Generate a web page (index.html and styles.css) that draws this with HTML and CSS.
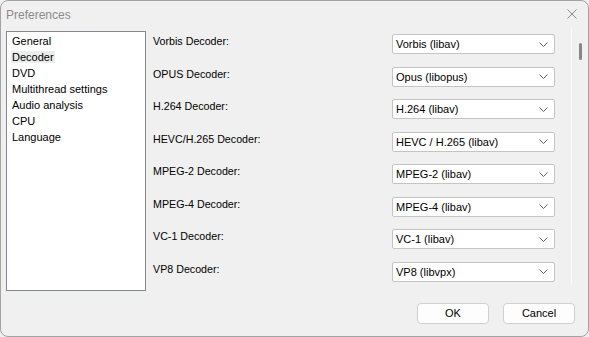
FILE: index.html
```html
<!DOCTYPE html>
<html lang="en">
<head>
  <meta charset="UTF-8">
  <title>Preferences</title>
  <link rel="stylesheet" href="styles.css">
</head>
<body>
  <div class="window">
    <div class="titlebar">
      <span class="title">Preferences</span>
      <svg class="close" width="10" height="10" viewBox="0 0 10 10"><path d="M0.5 0.5L9.5 9.5M9.5 0.5L0.5 9.5" stroke="#8a8a8a" stroke-width="1" fill="none"/></svg>
    </div>
    <div class="main">
      <ul class="pages">
        <li><span>General</span></li>
        <li class="selected"><span>Decoder</span></li>
        <li><span>DVD</span></li>
        <li><span>Multithread settings</span></li>
        <li><span>Audio analysis</span></li>
        <li><span>CPU</span></li>
        <li><span>Language</span></li>
      </ul>
      <div class="panel">
        <div class="rows">
          <div class="row"><label>Vorbis Decoder:</label><div class="combo"><span>Vorbis (libav)</span><svg class="chev" width="9" height="5" viewBox="0 0 9 5"><path d="M0.5 0.5L4.5 4.5L8.5 0.5" stroke="#606060" fill="none"/></svg></div></div>
          <div class="row"><label>OPUS Decoder:</label><div class="combo"><span>Opus (libopus)</span><svg class="chev" width="9" height="5" viewBox="0 0 9 5"><path d="M0.5 0.5L4.5 4.5L8.5 0.5" stroke="#606060" fill="none"/></svg></div></div>
          <div class="row"><label>H.264 Decoder:</label><div class="combo"><span>H.264 (libav)</span><svg class="chev" width="9" height="5" viewBox="0 0 9 5"><path d="M0.5 0.5L4.5 4.5L8.5 0.5" stroke="#606060" fill="none"/></svg></div></div>
          <div class="row"><label>HEVC/H.265 Decoder:</label><div class="combo"><span>HEVC / H.265 (libav)</span><svg class="chev" width="9" height="5" viewBox="0 0 9 5"><path d="M0.5 0.5L4.5 4.5L8.5 0.5" stroke="#606060" fill="none"/></svg></div></div>
          <div class="row"><label>MPEG-2 Decoder:</label><div class="combo"><span>MPEG-2 (libav)</span><svg class="chev" width="9" height="5" viewBox="0 0 9 5"><path d="M0.5 0.5L4.5 4.5L8.5 0.5" stroke="#606060" fill="none"/></svg></div></div>
          <div class="row"><label>MPEG-4 Decoder:</label><div class="combo"><span>MPEG-4 (libav)</span><svg class="chev" width="9" height="5" viewBox="0 0 9 5"><path d="M0.5 0.5L4.5 4.5L8.5 0.5" stroke="#606060" fill="none"/></svg></div></div>
          <div class="row"><label>VC-1 Decoder:</label><div class="combo"><span>VC-1 (libav)</span><svg class="chev" width="9" height="5" viewBox="0 0 9 5"><path d="M0.5 0.5L4.5 4.5L8.5 0.5" stroke="#606060" fill="none"/></svg></div></div>
          <div class="row"><label>VP8 Decoder:</label><div class="combo"><span>VP8 (libvpx)</span><svg class="chev" width="9" height="5" viewBox="0 0 9 5"><path d="M0.5 0.5L4.5 4.5L8.5 0.5" stroke="#606060" fill="none"/></svg></div></div>
        </div>
        <div class="scrollbar"><div class="thumb"></div></div>
      </div>
    </div>
    <div class="footer">
      <button type="button">OK</button>
      <button type="button">Cancel</button>
    </div>
  </div>
</body>
</html>
```

FILE: styles.css
```css
html, body { margin: 0; padding: 0; background: #f0f0f0; }
body { font-family: "Liberation Sans", Arial, sans-serif; font-size: 11px; color: #000; }
.window { box-sizing: border-box; width: 589px; height: 337px; border: 1px solid #a3a3a3; border-radius: 8px; background: #f0f0f0; overflow: hidden; display: flex; flex-direction: column; }
.titlebar { height: 26px; display: flex; align-items: center; justify-content: space-between; padding: 0 11px 0 5px; }
.title { font-size: 12px; color: #8b8b8b; margin-top: 1px; }
.main { display: flex; padding-right: 2px; }
.pages { list-style: none; margin: 4px 0 0 5px; padding: 1px 0 0; box-sizing: border-box; width: 140px; height: 260px; background: #fff; border: 1px solid #828790; }
.pages li { height: 16px; line-height: 16px; padding-left: 4px; }
.pages li span { padding: 0 1px; }
.pages li.selected span { background: #ececec; }
.panel { flex: 1; display: flex; height: 258px; overflow: hidden; }
.rows { flex: 1; padding: 4px 0 0 7px; }
.row { display: flex; height: 32.5px; }
.row label { width: 239px; line-height: 21px; font-size: 10.7px; }
.combo { box-sizing: border-box; width: 163px; height: 20px; margin-top: 3px; background: #fff; border: 1px solid #c4c4c4; border-radius: 2px; display: flex; align-items: center; justify-content: space-between; padding: 0 6px 0 3px; }
.combo span { line-height: 18px; }
.scrollbar { width: 14px; border-left: 1px solid #fbfbfb; }
.thumb { width: 3px; height: 17px; margin: 16px 0 0 7px; background: #868686; border-radius: 2px; }
.footer { display: flex; justify-content: flex-end; gap: 14px; padding: 0 13px 0 0; margin-top: 12px; }
.footer button { box-sizing: border-box; width: 72px; height: 21px; line-height: 19px; font-family: "Liberation Sans", Arial, sans-serif; font-size: 11px; color: #000; background: #fdfdfd; border: 1px solid #d0d0d0; border-radius: 4px; padding: 0; }
```
